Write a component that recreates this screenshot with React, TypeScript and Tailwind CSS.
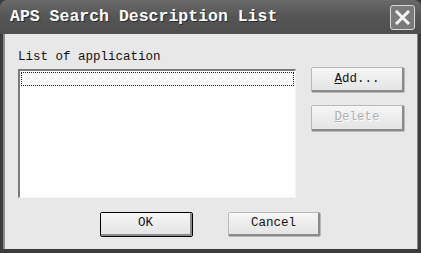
import React from 'react'

const mono = { fontFamily: '"Liberation Mono", "DejaVu Sans Mono", monospace' }

function XpButton({
  children,
  isDefault,
  disabled,
  className,
}: {
  children: React.ReactNode
  isDefault?: boolean
  disabled?: boolean
  className?: string
}) {
  return (
    <div
      className={
        'flex items-center justify-center rounded-[2px] ' +
        (isDefault ? 'border border-black ' : 'border border-[#b8b8b8] ') +
        (className ?? '')
      }
    >
      <div className="flex h-full w-full items-center justify-center border-r-2 border-b-2 border-[#8a8a8a] bg-gradient-to-b from-[#f6f6f6] to-[#e4e4e4]">
        <span
          className={
            'text-[12.5px] leading-none ' +
            (disabled ? 'text-[#b0b0b0] [text-shadow:1px_1px_0_#ffffff]' : 'text-[#111]')
          }
          style={mono}
        >
          {children}
        </span>
      </div>
    </div>
  )
}

export default function App() {
  return (
    <div className="w-[421px] h-[253px] flex flex-col overflow-hidden bg-[#3c3c3c]">
      {/* Title bar */}
      <div className="h-[34px] flex items-center justify-between rounded-t-[7px] bg-gradient-to-b from-[#6a6a6a] via-[#555555] to-[#4e4e4e] pl-[10px] pr-[6px]">
        <span
          className="text-[16.5px] font-bold text-white [text-shadow:1px_1px_0_#2a2a2a]"
          style={mono}
        >
          APS Search Description List
        </span>
        <div className="w-[25px] h-[25px] rounded-[3px] border border-[#d8d8d8] bg-[#7a7a7a] flex items-center justify-center">
          <svg width="15" height="15" viewBox="0 0 15 15">
            <path d="M2 2 L13 13 M13 2 L2 13" stroke="#f4f4f4" strokeWidth="3" strokeLinecap="square" />
          </svg>
        </div>
      </div>

      {/* Body */}
      <div className="flex-1 mx-[3px] mb-[4px] border-l-2 border-r border-[#8a8a8a] bg-[#e8e8e8] flex flex-col pl-[13px] pr-[12px] pt-[16px]">
        <div className="flex">
          <div className="flex flex-col">
            <span className="text-[12.5px] leading-[15px] text-[#111]" style={mono}>
              List of application
            </span>
            <div className="mt-[4px] w-[278px] h-[129px] border-t-2 border-l-2 border-[#7a7a7a] border-r border-b border-r-[#f4f4f4] border-b-[#f4f4f4] bg-white p-[1px]">
              <div className="h-[14px] border border-dotted border-[#222]" />
            </div>
          </div>
          <div className="ml-[15px] mt-[17px] flex flex-col gap-[12px]">
            <XpButton className="w-[94px] h-[26px]">
              <span className="underline">A</span>dd...
            </XpButton>
            <XpButton className="w-[94px] h-[27px]" disabled>
              <span className="underline">D</span>elete
            </XpButton>
          </div>
        </div>
        <div className="mt-[14px] flex gap-[35px] pl-[82px]">
          <XpButton className="w-[93px] h-[25px]" isDefault>
            OK
          </XpButton>
          <XpButton className="w-[93px] h-[25px]">Cancel</XpButton>
        </div>
      </div>
    </div>
  )
}
